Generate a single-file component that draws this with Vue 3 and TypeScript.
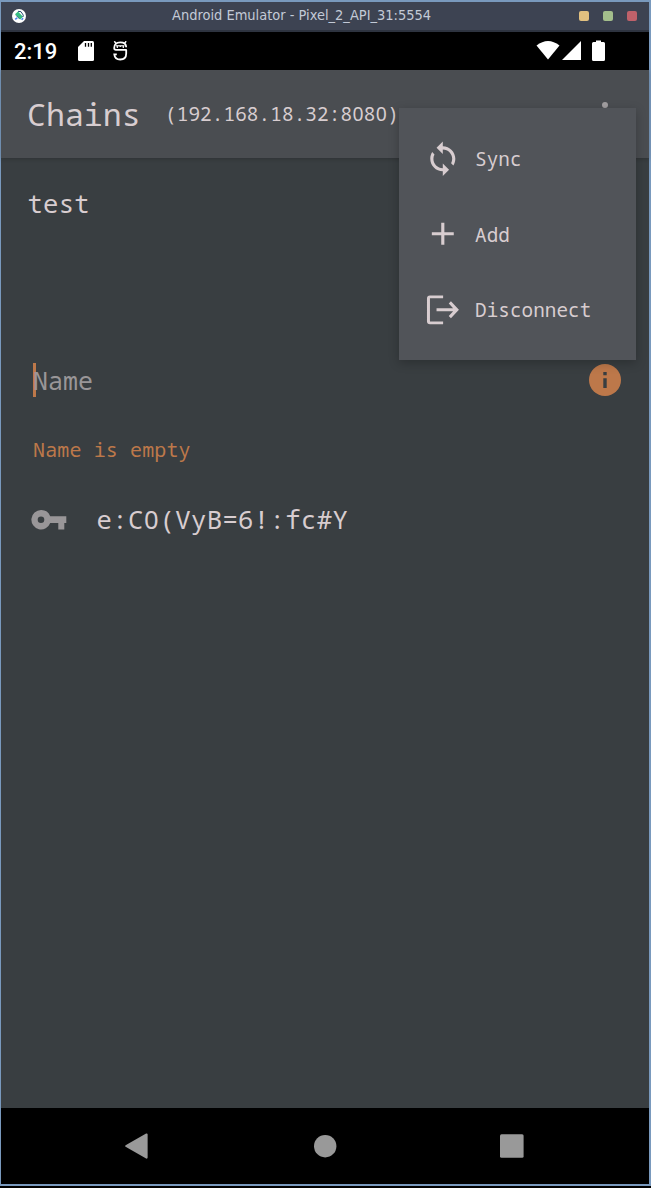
<script setup lang="ts">
interface MenuItem {
  label: string
  path: string
}

const address = '(192.168.18.32:8080)'
const password = 'e:C0(VyB=6!:fc#Y'

// Zeros are set in a face whose zero has no slash.
const splitZeros = (text: string): string[] => text.split(/(0)/).filter(Boolean)

const windowButtons: string[] = ['minimize', 'maximize', 'close']
const menu: MenuItem[] = [
  {
    label: 'Sync',
    path: 'M12 4V1L8 5l4 4V6c3.31 0 6 2.69 6 6 0 1.01-.25 1.97-.7 2.8l1.46 1.46C19.54 15.03 20 13.57 20 12c0-4.42-3.58-8-8-8zm0 14c-3.31 0-6-2.69-6-6 0-1.01.25-1.97.7-2.8L5.24 7.74C4.46 8.97 4 10.43 4 12c0 4.42 3.58 8 8 8v3l4-4-4-4v3z',
  },
  { label: 'Add', path: 'M19 13h-6v6h-2v-6H5v-2h6V5h2v6h6z' },
  {
    label: 'Disconnect',
    path: 'M12.200 2.800H3.800Q1.900 2.800 1.900 4.700v14.600Q1.900 21.200 3.800 21.200h8.400v-1.800H3.800V4.600h8.400zM17.200 6.600l-1.400 1.400L18.600 11H8v2h10.600l-2.800 3 1.400 1.400L22.300 12z',
  },
]
</script>

<template>
  <div class="window">
    <header class="titlebar">
      <svg class="app-icon" viewBox="0 0 14 14">
        <circle cx="7" cy="7" r="7" fill="#fff" />
        <path d="M3 5.200l3-2.700 5 5.300-2.800 2.700z" fill="#35bd83" />
        <path d="M6 2.300l3 .4 2.300 3.500-.4 1.800" fill="none" stroke="#244d70" stroke-width="1" />
        <path d="M4.200 6.500l3.300 3.400" stroke="#244d70" stroke-width=".8" />
        <path d="M3.200 10.300l2-1.500M9.600 10.700l1.500-1.500" stroke="#4b83ee" stroke-width="1.600" />
      </svg>
      <span class="title">Android Emulator - Pixel_2_API_31:5554</span>
      <div class="buttons">
        <i v-for="b in windowButtons" :key="b" :class="b"></i>
      </div>
    </header>

    <div class="status">
      <span class="clock">2:19</span>
      <svg class="sd" viewBox="0 0 16 20">
        <path d="M6 0h8.500Q16 0 16 1.500v17Q16 20 14.500 20h-13Q0 20 0 18.500V6z" fill="#fff" />
        <path d="M7.500 2v3.800M10.500 2v3.800M13.300 2v3.800" stroke="#000" stroke-width="1.300" />
      </svg>
      <svg class="debug" viewBox="0 0 15 20">
        <path d="M1.300 .200l2 2.500M13.200 .200l-2 2.500" stroke="#fff" stroke-width="1.400" />
        <path d="M13.800 8.900H3Q1.200 8.900 1.200 7 1.200 1.400 7.200 1.400T13.200 6.200M13.200 9v3.500Q13.200 18.500 7.200 18.500 1.900 18.500 1.300 13.300H3.800" fill="none" stroke="#fff" stroke-width="1.800" />
        <path d="M3 4.200h8.500v1.200H3z" fill="#fff" />
        <path d="M4.300 5v2M7.300 5v1M10.300 5v2" stroke="#fff" stroke-width="1.200" />
      </svg>
      <svg class="signals" viewBox="0 0 70 22">
        <path d="M.5 5.500Q12 -3.500 23.500 5.500L12 19.500z" fill="#fff" />
        <path d="M45 1v19H26z" fill="#fff" />
        <path d="M60 .500h5V2h2.500Q69 2 69 3.500v16Q69 21 67.500 21h-10Q56 21 56 19.500v-16Q56 2 57.500 2H60z" fill="#fff" />
      </svg>
    </div>

    <div class="appbar">
      <h1>Chains</h1>
      <span class="address"><span v-for="(part, i) in splitZeros(address)" :key="i" :class="{ zero: part === '0' }">{{ part }}</span></span>
      <span class="more"><i></i><i></i><i></i></span>
      <nav class="menu">
        <div v-for="item in menu" :key="item.label" class="menu-item">
          <svg viewBox="0 0 24 24"><path :d="item.path" /></svg>
          <span>{{ item.label }}</span>
        </div>
      </nav>
    </div>

    <main>
      <div class="chain">test</div>
      <div class="field">
        <i class="caret"></i>
        <span class="placeholder">Name</span>
        <svg class="info" viewBox="0 0 32 32">
          <circle cx="16" cy="16" r="16" fill="#bd784a" />
          <path d="M14.300 8h3.400v3.200h-3.400zM14.300 14.300h3.400v9.700h-3.400z" fill="#393e41" />
        </svg>
      </div>
      <div class="error">Name is empty</div>
      <div class="password">
        <svg viewBox="0 0 36 20">
          <path d="M10 0a9.700 9.700 0 1 0 9.200 13H27.300v6.500h6V13h2V6.300H19.200A9.700 9.700 0 0 0 10 0zm0 6.500a3.300 3.300 0 1 1 0 6.600 3.300 3.300 0 0 1 0-6.600z" fill="#999698" />
        </svg>
        <span><span v-for="(part, i) in splitZeros(password)" :key="i" :class="{ zero: part === '0' }">{{ part }}</span></span>
      </div>
    </main>

    <footer class="navbar">
      <svg viewBox="0 0 24 26"><path d="M.6 12.200L21.100 .500q1.500-.5 1.500 1v23q0 1.500-1.500 1L.6 13.800q-1-.8 0-1.600z" /></svg>
      <svg viewBox="0 0 24 24"><circle cx="12.200" cy="12.200" r="11.200" /></svg>
      <svg viewBox="0 0 24 24"><rect width="23.600" height="23.600" rx="1.500" y=".2" /></svg>
    </footer>
  </div>
</template>

<style>
body {
  background: #000;
}
</style>

<style scoped>
.window {
  box-sizing: border-box;
  width: 651px;
  height: 1186px;
  border: 2px solid #7999bd;
  border-left-width: 1px;
  display: flex;
  flex-direction: column;
  background: #393e41;
  color: #d8cdd0;
  font-family: "Noto Sans Mono", "Droid Sans Mono", "DejaVu Sans Mono", monospace;
  white-space: pre;
}
.zero {
  padding: 0 0.014em;
  font-family: "Noto Sans", sans-serif;
}
.titlebar {
  box-sizing: border-box;
  height: 30px;
  flex: none;
  display: flex;
  align-items: center;
  padding: 0 12px 1px 11px;
  background: #3d4352;
  border-bottom: 2px solid #2e3440;
}
.app-icon {
  width: 14px;
  height: 14px;
}
.title {
  flex: 1;
  margin-left: 146px;
  margin-bottom: 1px;
  font: 14.480px/20px "DejaVu Sans Condensed", "DejaVu Sans", sans-serif;
  color: #c3cad7;
}
.buttons {
  display: flex;
  gap: 14px;
}
.buttons i {
  width: 10px;
  height: 10px;
  border-radius: 2px;
}
.minimize { background: #e1c080; }
.maximize { background: #a3be8c; }
.close { background: #bf616a; }
.status {
  height: 38px;
  flex: none;
  display: flex;
  align-items: center;
  background: #000;
  padding-left: 13px;
}
.clock {
  width: 63.500px;
  margin-top: 2px;
  font: 500 22px/38px Roboto, sans-serif;
  color: #fff;
}
.sd {
  width: 16px;
  height: 20px;
}
.debug {
  width: 15px;
  height: 20px;
  margin-left: 19px;
}
.signals {
  width: 70px;
  height: 22px;
  margin-left: auto;
  margin-right: 43px;
}
.appbar {
  position: relative;
  z-index: 1;
  height: 88px;
  flex: none;
  display: flex;
  align-items: center;
  padding-left: 26px;
  background: #4a4d51;
  box-shadow: 0 1px 4px rgba(0, 0, 0, 0.2);
}
h1 {
  margin: 0 0 2px;
  width: 138px;
  font-size: 31.600px;
  font-weight: 400;
}
.address {
  margin-top: -1px;
  font-size: 19.380px;
  letter-spacing: 0.080px;
}
.more {
  display: flex;
  flex-direction: column;
  gap: 4px;
  margin-left: auto;
  margin-right: 41px;
  margin-top: 2px;
}
.more i {
  width: 6px;
  height: 6px;
  border-radius: 50%;
  background: #a29fa1;
}
.menu {
  box-sizing: border-box;
  position: absolute;
  top: 38px;
  right: 13px;
  width: 237px;
  height: 252px;
  padding: 12.800px 25.200px;
  background: #515459;
  box-shadow: 0 3px 10px rgba(0, 0, 0, 0.24);
}
.menu-item {
  height: 75.500px;
  display: flex;
  align-items: center;
  gap: 13.300px;
  font-size: 19.300px;
  letter-spacing: 0.050px;
}
.menu-item svg {
  width: 37.600px;
  height: 37.600px;
  fill: #d8cdd0;
}
main {
  flex: 1;
}
.chain {
  height: 92px;
  padding-left: 26.500px;
  font-size: 25.600px;
  line-height: 92px;
  letter-spacing: 0.250px;
}
.field {
  height: 34px;
  margin-top: 113px;
  padding: 0 28px 0 32px;
  display: flex;
  align-items: center;
}
.caret {
  width: 3px;
  height: 34px;
  margin-right: -3px;
  background: #bd784a;
}
.placeholder {
  flex: 1;
  margin-top: -1px;
  font-size: 25px;
  color: #999698;
}
.info {
  width: 32px;
  height: 32px;
}
.error {
  margin-top: 37px;
  padding-left: 32px;
  font-size: 20px;
  line-height: 32px;
  letter-spacing: 0.130px;
  color: #bd784a;
}
.password {
  height: 40px;
  margin-top: 33px;
  padding-left: 30px;
  display: flex;
  align-items: center;
  gap: 29.500px;
  font-size: 25.600px;
  letter-spacing: 0.380px;
}
.password svg {
  width: 36px;
  height: 20px;
  margin-top: 2px;
}
.navbar {
  height: 76px;
  flex: none;
  display: flex;
  align-items: center;
  justify-content: space-between;
  padding: 0 125px 0 124px;
  background: #000;
}
.navbar svg {
  width: 24px;
  height: 26px;
  fill: #999;
}
</style>
